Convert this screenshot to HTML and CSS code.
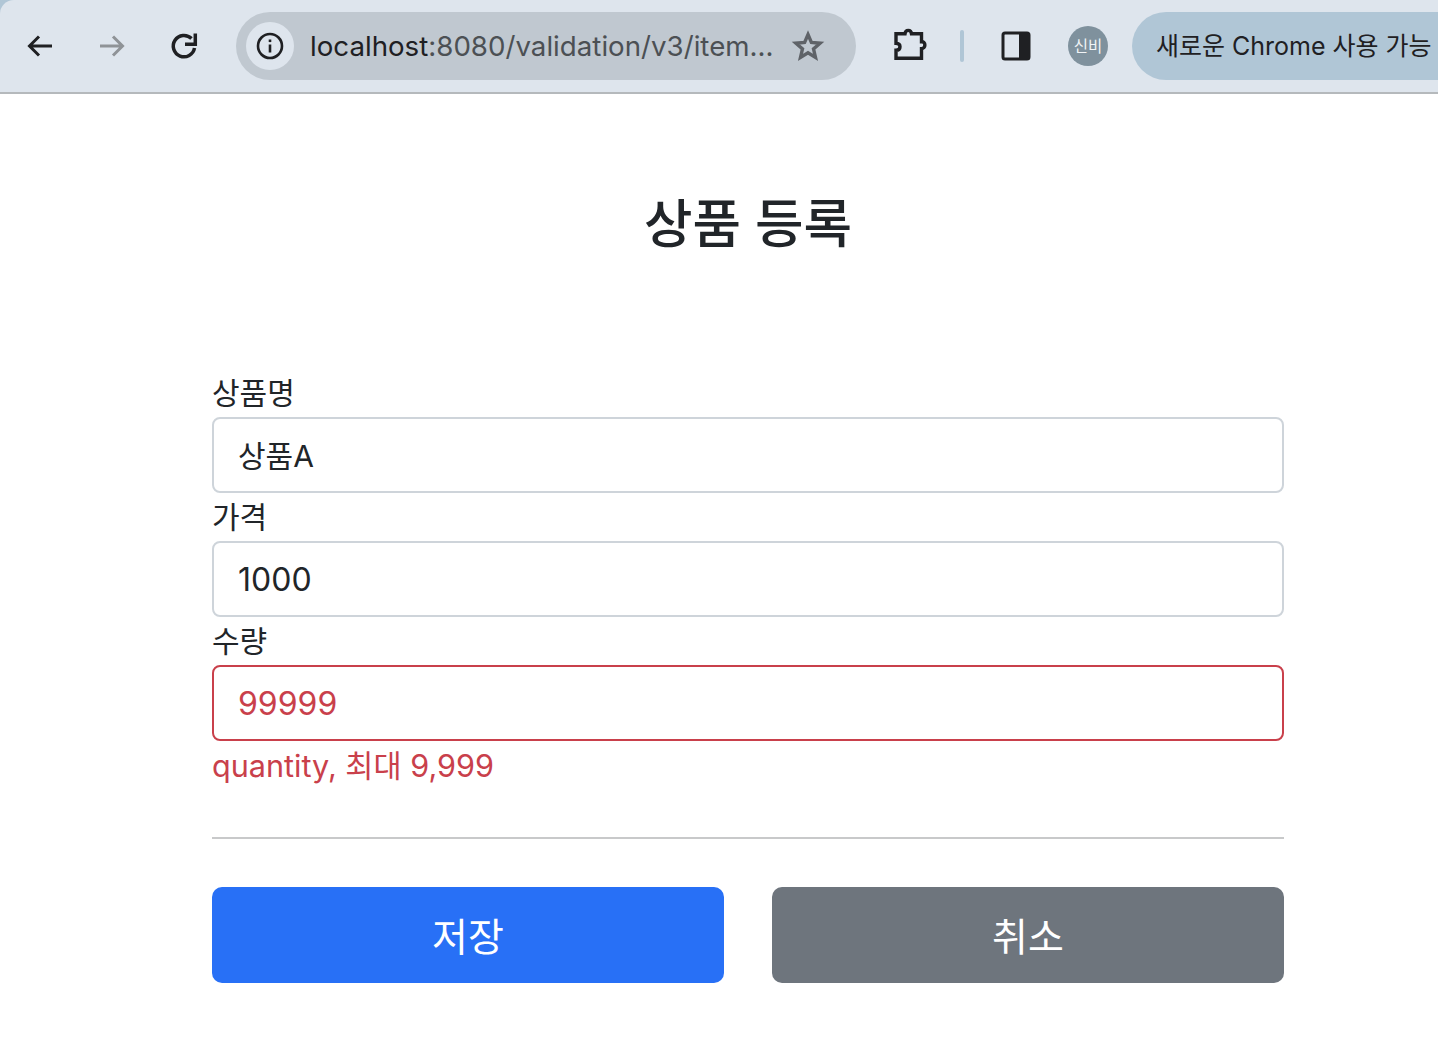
FILE: index.html
```html
<!DOCTYPE html>
<html lang="ko">
<head>
    <meta charset="UTF-8">
    <title>상품 등록</title>
    <link rel="stylesheet" href="styles.css">
</head>
<body>
    <header class="browser-bar">
        <div class="toolbar">
            <svg class="icon icon-back" viewBox="0 0 28 28"><path d="M26 14H4M13 4.500L3.500 14l9.500 9.500"/></svg>
            <svg class="icon icon-forward" viewBox="0 0 28 28"><path d="M2 14h22M15 4.500l9.500 9.500-9.500 9.500"/></svg>
            <svg class="icon icon-reload" viewBox="0 0 28 28"><path d="M21.500 6.500A10.700 10.700 0 1 0 24.500 16"/><path d="M25.300 1.500V12.300H15"/></svg>

            <div class="omnibox">
                <span class="site-info">
                    <svg viewBox="0 0 28 28"><circle cx="14" cy="14" r="12"/><path d="M14 12.500v8"/><path d="M14 7.500v2.600"/></svg>
                </span>
                <span class="url">localhost<span class="url-rest">:8080/validation/v3/item...</span></span>
                <svg class="star" viewBox="0 0 32 32"><path d="M16 4.500l3.400 8 8.700.7-6.600 5.700 2 8.500-7.500-4.600-7.500 4.600 2-8.500-6.600-5.700 8.700-.7z"/></svg>
            </div>

            <svg class="icon icon-ext" viewBox="0 0 34 34"><path d="M3 4.700h9c.5-4.500 6-4.500 6.500 0h10v8c4.500-.5 4.500 7 0 7v9.600H3v-8c3 0 4-1.500 4-3.500s-1-3.500-4-3.500z"/></svg>
            <span class="divider"></span>
            <svg class="icon icon-side" viewBox="0 0 30 30"><rect x="2" y="2" width="26" height="26" rx="2"/><path class="solid" d="M18 2h10v26H18z"/></svg>
            <span class="avatar">신비</span>
            <span class="chrome-update">새로운 Chrome 사용 가능</span>
        </div>
    </header>

    <main class="container">
        <div class="page-header">
            <h2>상품 등록</h2>
        </div>

        <form class="item-form">
            <div class="form-group">
                <label for="itemName">상품명</label>
                <input type="text" id="itemName" class="field-kr" value="상품A">
            </div>
            <div class="form-group">
                <label for="price">가격</label>
                <input type="text" id="price" value="1000">
            </div>
            <div class="form-group">
                <label for="quantity">수량</label>
                <input type="text" id="quantity" class="field-error" value="99999">
                <div class="error-message">quantity, 최대 9,999</div>
            </div>

            <hr>

            <div class="button-row">
                <button type="submit" class="btn btn-primary">저장</button>
                <button type="button" class="btn btn-secondary">취소</button>
            </div>
        </form>
    </main>
</body>
</html>
```

FILE: styles.css
```css
:root {
    --text-color: #212529;
    --border-color: #ced4da;
    --error-color: #c9404b;
    --toolbar-bg: #dee5ed;
}

* {
    margin: 0;
    padding: 0;
    box-sizing: border-box;
    font-family: Inter, "Noto Sans CJK KR", sans-serif;
}

html, body {
    overflow: hidden;
}

body {
    background-color: #ffffff;
    color: var(--text-color);
    height: 1050px;
}

/* Browser toolbar */
.browser-bar {
    background-color: #b0c6d6;
    border-bottom: 2px solid #b5b9bc;
    height: 94px;
}

.toolbar {
    display: flex;
    align-items: center;
    height: 92px;
    padding-left: 26px;
    background-color: var(--toolbar-bg);
    border-top-left-radius: 14px;
    white-space: nowrap;
}

.icon {
    flex: none;
    fill: none;
    stroke: #1f2023;
    stroke-width: 3;
}

.icon .solid {
    fill: #1f2023;
    stroke: none;
}

.icon-back {
    width: 28px;
    height: 28px;
}

.icon-forward {
    width: 28px;
    height: 28px;
    margin-left: 44px;
    stroke: #8f9397;
}

.icon-reload {
    width: 28px;
    height: 28px;
    margin-left: 44px;
    overflow: visible;
    stroke-width: 3.500;
}

.omnibox {
    flex: none;
    display: flex;
    align-items: center;
    width: 620px;
    height: 68px;
    margin-left: 38px;
    padding-left: 10px;
    background-color: #c0c8d0;
    border-radius: 34px;
}

.site-info {
    flex: none;
    display: flex;
    align-items: center;
    justify-content: center;
    width: 48px;
    height: 48px;
    background-color: var(--toolbar-bg);
    border-radius: 50%;
}

.site-info svg {
    width: 28px;
    height: 28px;
    fill: none;
    stroke: #1f2023;
    stroke-width: 2.600;
}

.url {
    width: 464px;
    margin-left: 16px;
    font-size: 27.700px;
    color: #1f2023;
}

.url-rest {
    color: #4c5054;
}

.star {
    flex: none;
    width: 32px;
    height: 32px;
    margin-left: 18px;
    fill: none;
    stroke: #5f6368;
    stroke-width: 3.400;
    overflow: visible;
}

.icon-ext {
    width: 34px;
    height: 34px;
    margin-left: 37px;
    stroke-width: 3.400;
    overflow: visible;
}

.divider {
    flex: none;
    width: 4px;
    height: 32px;
    margin-left: 33px;
    background-color: #b0c6d6;
    border-radius: 2px;
}

.icon-side {
    width: 30px;
    height: 30px;
    margin-left: 37px;
}

.avatar {
    flex: none;
    display: flex;
    align-items: center;
    justify-content: center;
    width: 40px;
    height: 40px;
    margin-left: 37px;
    padding-bottom: 2px;
    background-color: #7f919d;
    border-radius: 50%;
    color: #f1f4f6;
    font-size: 15.500px;
}

.chrome-update {
    flex: none;
    width: 340px;
    height: 68px;
    margin-left: 24px;
    padding-left: 24px;
    background-color: #b0c6d6;
    border-radius: 34px;
    color: #1f2023;
    font-size: 25px;
    line-height: 68px;
}

/* Form page */
.container {
    width: 1072px;
    margin-left: 212px;
}

.page-header {
    padding-top: 91px;
    margin-bottom: 107px;
    text-align: center;
}

.page-header h2 {
    font-size: 52.700px;
    font-weight: 500;
    line-height: 78px;
}

.form-group label {
    display: block;
    font-size: 30px;
    line-height: 46px;
    height: 47px;
}

.form-group + .form-group label {
    height: 48px;
    line-height: 48px;
}

.form-group input {
    display: block;
    width: 100%;
    height: 76px;
    padding: 0 24px;
    border: 2px solid var(--border-color);
    border-radius: 8px;
    background-color: #ffffff;
    color: var(--text-color);
    font-size: 32px;
}

.form-group input.field-kr {
    padding-bottom: 2px;
    font-size: 30px;
}

.form-group input.field-error {
    border-color: var(--error-color);
    color: var(--error-color);
}

.error-message {
    color: var(--error-color);
    font-size: 30.600px;
    line-height: 50px;
    height: 48px;
}

hr {
    height: 2px;
    margin-top: 48px;
    border: none;
    background-color: #c8c9ca;
}

.button-row {
    display: grid;
    grid-template-columns: 1fr 1fr;
    gap: 48px;
    margin-top: 48px;
}

.btn {
    height: 96px;
    padding-bottom: 3px;
    border: none;
    border-radius: 10px;
    color: #ffffff;
    font-size: 39px;
}

.btn-primary {
    background-color: #2870f6;
}

.btn-secondary {
    background-color: #6e757d;
}
```
